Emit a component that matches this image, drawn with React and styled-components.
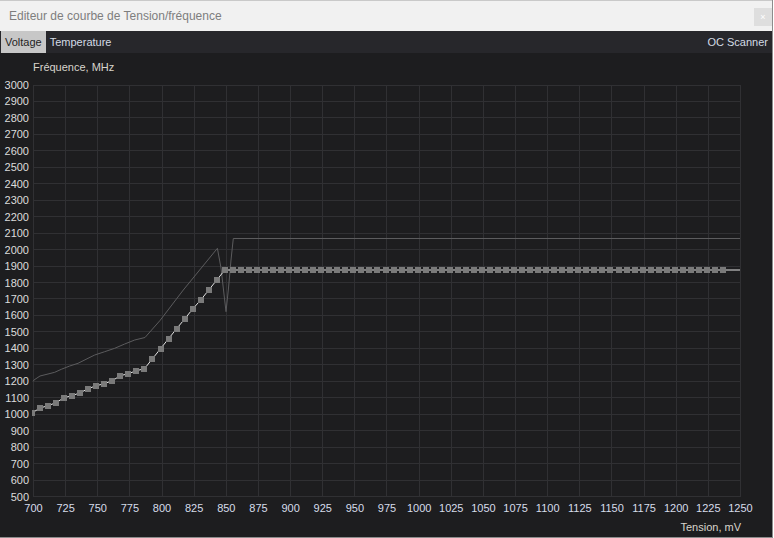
import React from "react";
import styled, { createGlobalStyle } from "styled-components";

const GlobalStyle = createGlobalStyle`
  html, body { margin: 0; padding: 0; background: #ffffff; }
  body { font-family: "Liberation Sans", Arial, sans-serif; }
  * { box-sizing: border-box; }
`;

const Window = styled.div`
  width: 773px;
  height: 538px;
  display: flex;
  flex-direction: column;
  background: #1d1d1f;
  border-right: 1px solid #8c8c8c;
  border-bottom: 1px solid #8c8c8c;
`;

const TitleBar = styled.div`
  height: 31px;
  flex: none;
  display: flex;
  align-items: center;
  justify-content: space-between;
  padding-left: 9px;
  background: #f1f1f1;
  border-top: 1px solid #c9c9c9;
`;

const Title = styled.div`
  font-size: 12px;
  color: #7e7e7e;
`;

const CloseButton = styled.div`
  width: 18px;
  height: 18px;
  margin-top: 2px;
  display: flex;
  align-items: center;
  justify-content: center;
  background: #dedede;
  color: #ffffff;
  font-size: 9px;
  line-height: 1;
`;

const TabBar = styled.div`
  height: 22px;
  flex: none;
  display: flex;
  align-items: stretch;
  padding-left: 1px;
  background: #27272b;
  font-size: 11px;
`;

const Tab = styled.div`
  display: flex;
  align-items: center;
  padding: 0 4px;
  background: ${(p) => (p.$active ? "#c7c7c7" : "transparent")};
  color: ${(p) => (p.$active ? "#242424" : "#d3dbe5")};
`;

const Spacer = styled.div`
  flex: 1;
`;

const Content = styled.div`
  flex: 1;
  display: flex;
  flex-direction: column;
`;

const AxisTitle = styled.div`
  font-size: 11px;
  line-height: 14px;
  color: #d8d4cc;
  padding: ${(p) => (p.$bottom ? "4px 31px 0 0" : "7px 0 0 33px")};
  text-align: ${(p) => (p.$bottom ? "right" : "left")};
`;

const Chart = styled.svg`
  display: block;
  width: 772px;
  height: 442px;
  flex: none;
`;

const LEFT = 33;
const RIGHT = 740;
const TOP = 85;
const BOTTOM = 496.5;
const xStep = (RIGHT - LEFT) / 22;
const yStep = (BOTTOM - TOP) / 25;

const xTicks = Array.from({ length: 23 }, (_, i) => ({
  v: 700 + i * 25,
  x: LEFT + i * xStep,
}));
const yTicks = Array.from({ length: 26 }, (_, j) => ({
  v: 3000 - j * 100,
  y: TOP + j * yStep,
}));

const risingYs = [
  413, 408, 405.7, 402.7, 397.7, 395.7, 392.7, 388.7, 385.7, 383.7, 380.7,
  375.7, 373.7, 370.7, 368.7, 358.7, 348.7, 338.7, 328.7, 319, 309, 300, 290,
  280, 270,
];

const points = [];
for (let k = -1; k <= 85; k++) {
  const x = 40 + k * 8.035;
  const y = k + 1 < risingYs.length ? risingYs[k + 1] : 270;
  points.push([x, y]);
}

const grayCurve = [
  [33, 381.5], [34, 380], [40, 376], [48, 374], [54.7, 372.3], [61.3, 369.3],
  [69.7, 366], [78, 363.3], [88, 358.3], [94.7, 355], [104.7, 351.7],
  [114.7, 348.3], [124.7, 344], [134.7, 340], [145, 337.5], [160, 320.5],
  [183.3, 290], [217.4, 248.3], [221, 268], [226, 311.7], [228.5, 288],
  [231, 260], [233.3, 238.5], [740, 238.5],
];

const toPath = (pts) => pts.map((p, i) => `${i ? "L" : "M"}${p[0]} ${p[1]}`).join(" ");

const labelStyle = {
  fontFamily: '"Liberation Sans", Arial, sans-serif',
  fontSize: 11,
};

function CurveChart() {
  return (
    <Chart viewBox="0 74 772 442">
      <defs>
        <clipPath id="plot">
          <rect x={32} y={TOP} width={RIGHT - 32 + 1} height={BOTTOM - TOP + 1} />
        </clipPath>
      </defs>
      <g stroke="#303033" strokeWidth="1" shapeRendering="crispEdges">
        {xTicks.map((t) => (
          <line key={t.v} x1={Math.round(t.x) + 0.5} x2={Math.round(t.x) + 0.5} y1={TOP} y2={BOTTOM} />
        ))}
        {yTicks.map((t) => (
          <line key={t.v} x1={LEFT} x2={RIGHT + 1} y1={Math.floor(t.y) + 0.5} y2={Math.floor(t.y) + 0.5} />
        ))}
      </g>
      <g style={labelStyle} fill="#dcdcdc">
        {yTicks.map((t) => (
          <text key={t.v} x={29} y={t.y + 4} textAnchor="end">
            {t.v}
          </text>
        ))}
        {xTicks.map((t) => (
          <text key={t.v} x={t.x + 0.5} y={512} textAnchor="middle" fill="#d6dcea">
            {t.v}
          </text>
        ))}
      </g>
      <g clipPath="url(#plot)">
        <path d={toPath(grayCurve)} fill="none" stroke="#5c5c5e" strokeWidth="1" />
        <path d={toPath([...points, [740, 270]])} fill="none" stroke="#e4e4e4" strokeWidth="1" />
        <g fill="#7a7a7a" shapeRendering="crispEdges">
          {points.map(([x, y], i) => (
            <rect key={i} x={Math.round(x - 3)} y={Math.round(y - 3)} width={6} height={6} />
          ))}
        </g>
      </g>
    </Chart>
  );
}

export default function App() {
  return (
    <>
      <GlobalStyle />
      <Window>
        <TitleBar>
          <Title>Editeur de courbe de Tension/fréquence</Title>
          <CloseButton>×</CloseButton>
        </TitleBar>
        <TabBar>
          <Tab $active>Voltage</Tab>
          <Tab>Temperature</Tab>
          <Spacer />
          <Tab>OC Scanner</Tab>
        </TabBar>
        <Content>
          <AxisTitle>Fréquence, MHz</AxisTitle>
          <CurveChart />
          <AxisTitle $bottom>Tension, mV</AxisTitle>
        </Content>
      </Window>
    </>
  );
}
